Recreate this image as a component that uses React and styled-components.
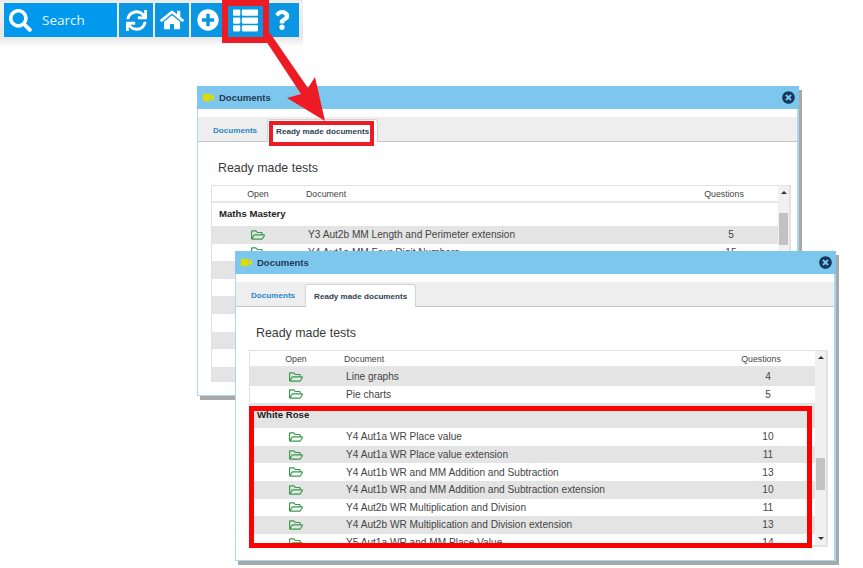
import React from 'react';
import styled, { createGlobalStyle } from 'styled-components';
import {
  FaSearch,
  FaSync,
  FaHome,
  FaPlusCircle,
  FaThList,
  FaQuestion,
  FaRegFolderOpen,
  FaTimesCircle,
  FaVideo,
} from 'react-icons/fa';

const GlobalStyle = createGlobalStyle`
  html, body {
    margin: 0;
    padding: 0;
    background: #fff;
  }
`;

const Page = styled.div`
  position: relative;
  width: 863px;
  height: 568px;
  overflow: hidden;
  background: #fff;
  font-family: "Liberation Sans", Arial, sans-serif;
`;

const Toolbar = styled.div`
  display: flex;
  gap: 2px;
  width: 295px;
  height: 34px;
  padding: 3px 4px 10px;
  background: linear-gradient(#e8e8e8 0, #f2f2f2 3px, #e6e6e6 37px, #ffffff 47px);
`;

const SearchButton = styled.div`
  display: flex;
  align-items: center;
  gap: 10px;
  width: 113px;
  padding-left: 5px;
  box-sizing: border-box;
  background: #0099ee;
  color: #fff;
  font-family: "Open Sans", sans-serif;
  font-size: 13.5px;

  span {
    opacity: 0.9;
  }
`;

const ToolButton = styled.div`
  display: flex;
  align-items: center;
  justify-content: center;
  width: ${(p) => p.$width || 34}px;
  background: #0a96e2;
  color: #fff;
`;

const Callout = styled.div`
  position: absolute;
  left: ${(p) => p.$x}px;
  top: ${(p) => p.$y}px;
  width: ${(p) => p.$w}px;
  height: ${(p) => p.$h}px;
  box-sizing: border-box;
  border: ${(p) => p.$thick}px solid ${(p) => p.$color};
  z-index: ${(p) => p.$z};
`;

const Arrow = styled.svg`
  position: absolute;
  left: 0;
  top: 0;
  z-index: 2;
`;

const Window = styled.div`
  position: absolute;
  left: ${(p) => p.$x}px;
  top: ${(p) => p.$y}px;
  width: ${(p) => p.$w}px;
  height: ${(p) => p.$h}px;
  box-sizing: border-box;
  display: flex;
  flex-direction: column;
  background: #fff;
  border: 1px solid #a9d8f2;
  border-top: 0;
  border-right-width: 2px;
  box-shadow: 3px 4px 0 #a8a8a8;
  z-index: ${(p) => p.$z};
`;

const TitleBar = styled.div`
  display: flex;
  align-items: center;
  flex: none;
  height: 23px;
  padding: 0 4px 1px 5px;
  box-sizing: border-box;
  margin: 0 -2px 0 -1px;
  background: #7dc7ef;
  color: #1f3a55;
  font-size: 9.5px;
  font-weight: 700;
`;

const TitleIcon = styled(FaVideo)`
  color: #dcdc00;
  font-size: 11px;
  margin-left: 1px;
  margin-right: 5px;
`;

const CloseIcon = styled(FaTimesCircle)`
  margin-left: auto;
  color: #17385a;
  font-size: 13px;
`;

const TabBand = styled.div`
  display: flex;
  align-items: flex-end;
  flex: none;
  height: 25px;
  margin-top: 8px;
  padding-left: 7px;
  background: #eeeeee;
  border-bottom: 1px solid #c6c6c6;
  box-sizing: border-box;
`;

const Tab = styled.div`
  display: flex;
  align-items: center;
  height: ${(p) => (p.$active ? 23 : 22)}px;
  padding: 1px 8px 0;
  margin-left: ${(p) => (p.$active ? 2 : 0)}px;
  margin-bottom: ${(p) => (p.$active ? -1 : 0)}px;
  box-sizing: border-box;
  font-size: 8.1px;
  font-weight: 700;
  color: ${(p) => (p.$active ? '#2f4256' : '#2b87c8')};
  background: ${(p) => (p.$active ? '#fff' : 'transparent')};
  border: ${(p) => (p.$active ? '1px solid #d4d4d4' : '0')};
  border-bottom: 0;
  border-radius: 3px 3px 0 0;
`;

const Heading = styled.div`
  flex: none;
  margin: 19px 0 0 20px;
  font-size: 12.4px;
  line-height: 15px;
  color: #3a3a3a;
`;

const TableBox = styled.div`
  display: flex;
  margin: 9px 6px 0 13px;
  height: 197px;
  box-sizing: border-box;
  border: 2px solid #e2e2e2;
  border-width: 1px 2px 2px 1px;
  overflow: hidden;
`;

const TableMain = styled.div`
  flex: 1;
  min-width: 0;
  overflow: hidden;
`;

const Row = styled.div`
  display: grid;
  grid-template-columns: 92px 1fr 80px;
  align-items: center;
  height: 17.6px;
  padding-right: 7px;
  font-size: 10.15px;
  color: #444;
  background: ${(p) => (p.$shaded ? '#e4e4e4' : '#fff')};
`;

const HeaderRow = styled(Row)`
  height: 17px;
  box-sizing: border-box;
  padding-right: 14px;
  font-size: 8.8px;
  color: #444;
  border-bottom: 2px solid #e6e6e6;
`;

const OpenCell = styled.div`
  display: flex;
  justify-content: center;
`;

const FolderIcon = styled(FaRegFolderOpen)`
  color: #3a9a4a;
  font-size: 14px;
`;

const DocCell = styled.div`
  padding-left: ${(p) => (p.$header ? 2 : 4)}px;
  white-space: nowrap;
`;

const NumCell = styled.div`
  text-align: center;
`;

const GroupRow = styled.div`
  height: ${(p) => p.$h}px;
  box-sizing: border-box;
  padding: ${(p) => p.$pad}px 0 0 7px;
  font-size: 9.6px;
  font-weight: 700;
  color: #1e1e1e;
  background: ${(p) => (p.$shaded ? '#e4e4e4' : '#fff')};
`;

const Scrollbar = styled.div`
  position: relative;
  display: flex;
  flex: none;
  flex-direction: column;
  align-items: center;
  justify-content: space-between;
  width: 11px;
  padding: 5px 0;
  box-sizing: border-box;
  background: #f0f0f0;
`;

const ScrollArrow = styled.div`
  width: 0;
  height: 0;
  border-left: 3px solid transparent;
  border-right: 3px solid transparent;
  border-${(p) => (p.$down ? 'top' : 'bottom')}: 3px solid #333;
`;

const ScrollThumb = styled.div`
  position: absolute;
  left: 1px;
  top: ${(p) => p.$top}px;
  width: 9px;
  height: 32px;
  background: #c2c2c2;
`;

const DocRow = ({ name, count, shaded }) => (
  <Row $shaded={shaded}>
    <OpenCell>
      <FolderIcon />
    </OpenCell>
    <DocCell>{name}</DocCell>
    <NumCell>{count}</NumCell>
  </Row>
);

const backRows = [
  ['Y3 Aut2b MM Length and Perimeter extension', 5],
  ['Y4 Aut1a MM Four Digit Numbers', 15],
  ['', ''],
  ['', ''],
  ['', ''],
  ['', ''],
  ['', ''],
  ['', ''],
  ['', ''],
];

const whiteRose = [
  ['Y4 Aut1a WR Place value', 10],
  ['Y4 Aut1a WR Place value extension', 11],
  ['Y4 Aut1b WR and MM Addition and Subtraction', 13],
  ['Y4 Aut1b WR and MM Addition and Subtraction extension', 10],
  ['Y4 Aut2b WR Multiplication and Division', 11],
  ['Y4 Aut2b WR Multiplication and Division extension', 13],
  ['Y5 Aut1a WR and MM Place Value', 14],
];

const TableHeader = () => (
  <HeaderRow>
    <OpenCell>Open</OpenCell>
    <DocCell $header>Document</DocCell>
    <NumCell>Questions</NumCell>
  </HeaderRow>
);

const DocumentsWindow = ({ x, y, w, z, thumbTop, children }) => (
  <Window $x={x} $y={y} $w={w} $h={310} $z={z}>
    <TitleBar>
      <TitleIcon />
      Documents
      <CloseIcon />
    </TitleBar>
    <TabBand>
      <Tab>Documents</Tab>
      <Tab $active>Ready made documents</Tab>
    </TabBand>
    <Heading>Ready made tests</Heading>
    <TableBox>
      <TableMain>
        <TableHeader />
        {children}
      </TableMain>
      <Scrollbar>
        <ScrollArrow />
        <ScrollThumb $top={thumbTop} />
        <ScrollArrow $down />
      </Scrollbar>
    </TableBox>
  </Window>
);

export default function App() {
  return (
    <Page>
      <GlobalStyle />
      <Toolbar>
        <SearchButton>
          <FaSearch size={23} />
          <span>Search</span>
        </SearchButton>
        <ToolButton>
          <FaSync size={21} />
        </ToolButton>
        <ToolButton>
          <FaHome size={24} />
        </ToolButton>
        <ToolButton>
          <FaPlusCircle size={22} />
        </ToolButton>
        <ToolButton $width={36}>
          <FaThList size={25} />
        </ToolButton>
        <ToolButton>
          <FaQuestion size={20} />
        </ToolButton>
      </Toolbar>

      <DocumentsWindow x={197} y={86} w={602} z={1} thumbTop={27}>
        <GroupRow $h={23} $pad={5}>Maths Mastery</GroupRow>
        {backRows.map(([name, count], i) => (
          <DocRow key={i} name={name} count={count} shaded={i % 2 === 0} />
        ))}
      </DocumentsWindow>

      <DocumentsWindow x={235} y={251} w={601} z={3} thumbTop={107}>
        <DocRow name="Line graphs" count={4} shaded />
        <DocRow name="Pie charts" count={5} />
        <GroupRow $h={25} $pad={6} $shaded>White Rose</GroupRow>
        {whiteRose.map(([name, count], i) => (
          <DocRow key={name} name={name} count={count} shaded={i % 2 === 1} />
        ))}
      </DocumentsWindow>

      <Callout $x={222} $y={0} $w={47} $h={43} $thick={6} $color="#ed1c24" $z={4} />
      <Callout $x={269} $y={121} $w={105} $h={25} $thick={4} $color="#ed1c24" $z={2} />
      <Callout $x={249} $y={406} $w={563} $h={142} $thick={5} $color="#ff0000" $z={4} />

      <Arrow width="863" height="568" viewBox="0 0 863 568">
        <polygon points="264,38 270,33 308,88 315,77 325,121 287,98 301,94" fill="#ed1c24" />
      </Arrow>
    </Page>
  );
}
